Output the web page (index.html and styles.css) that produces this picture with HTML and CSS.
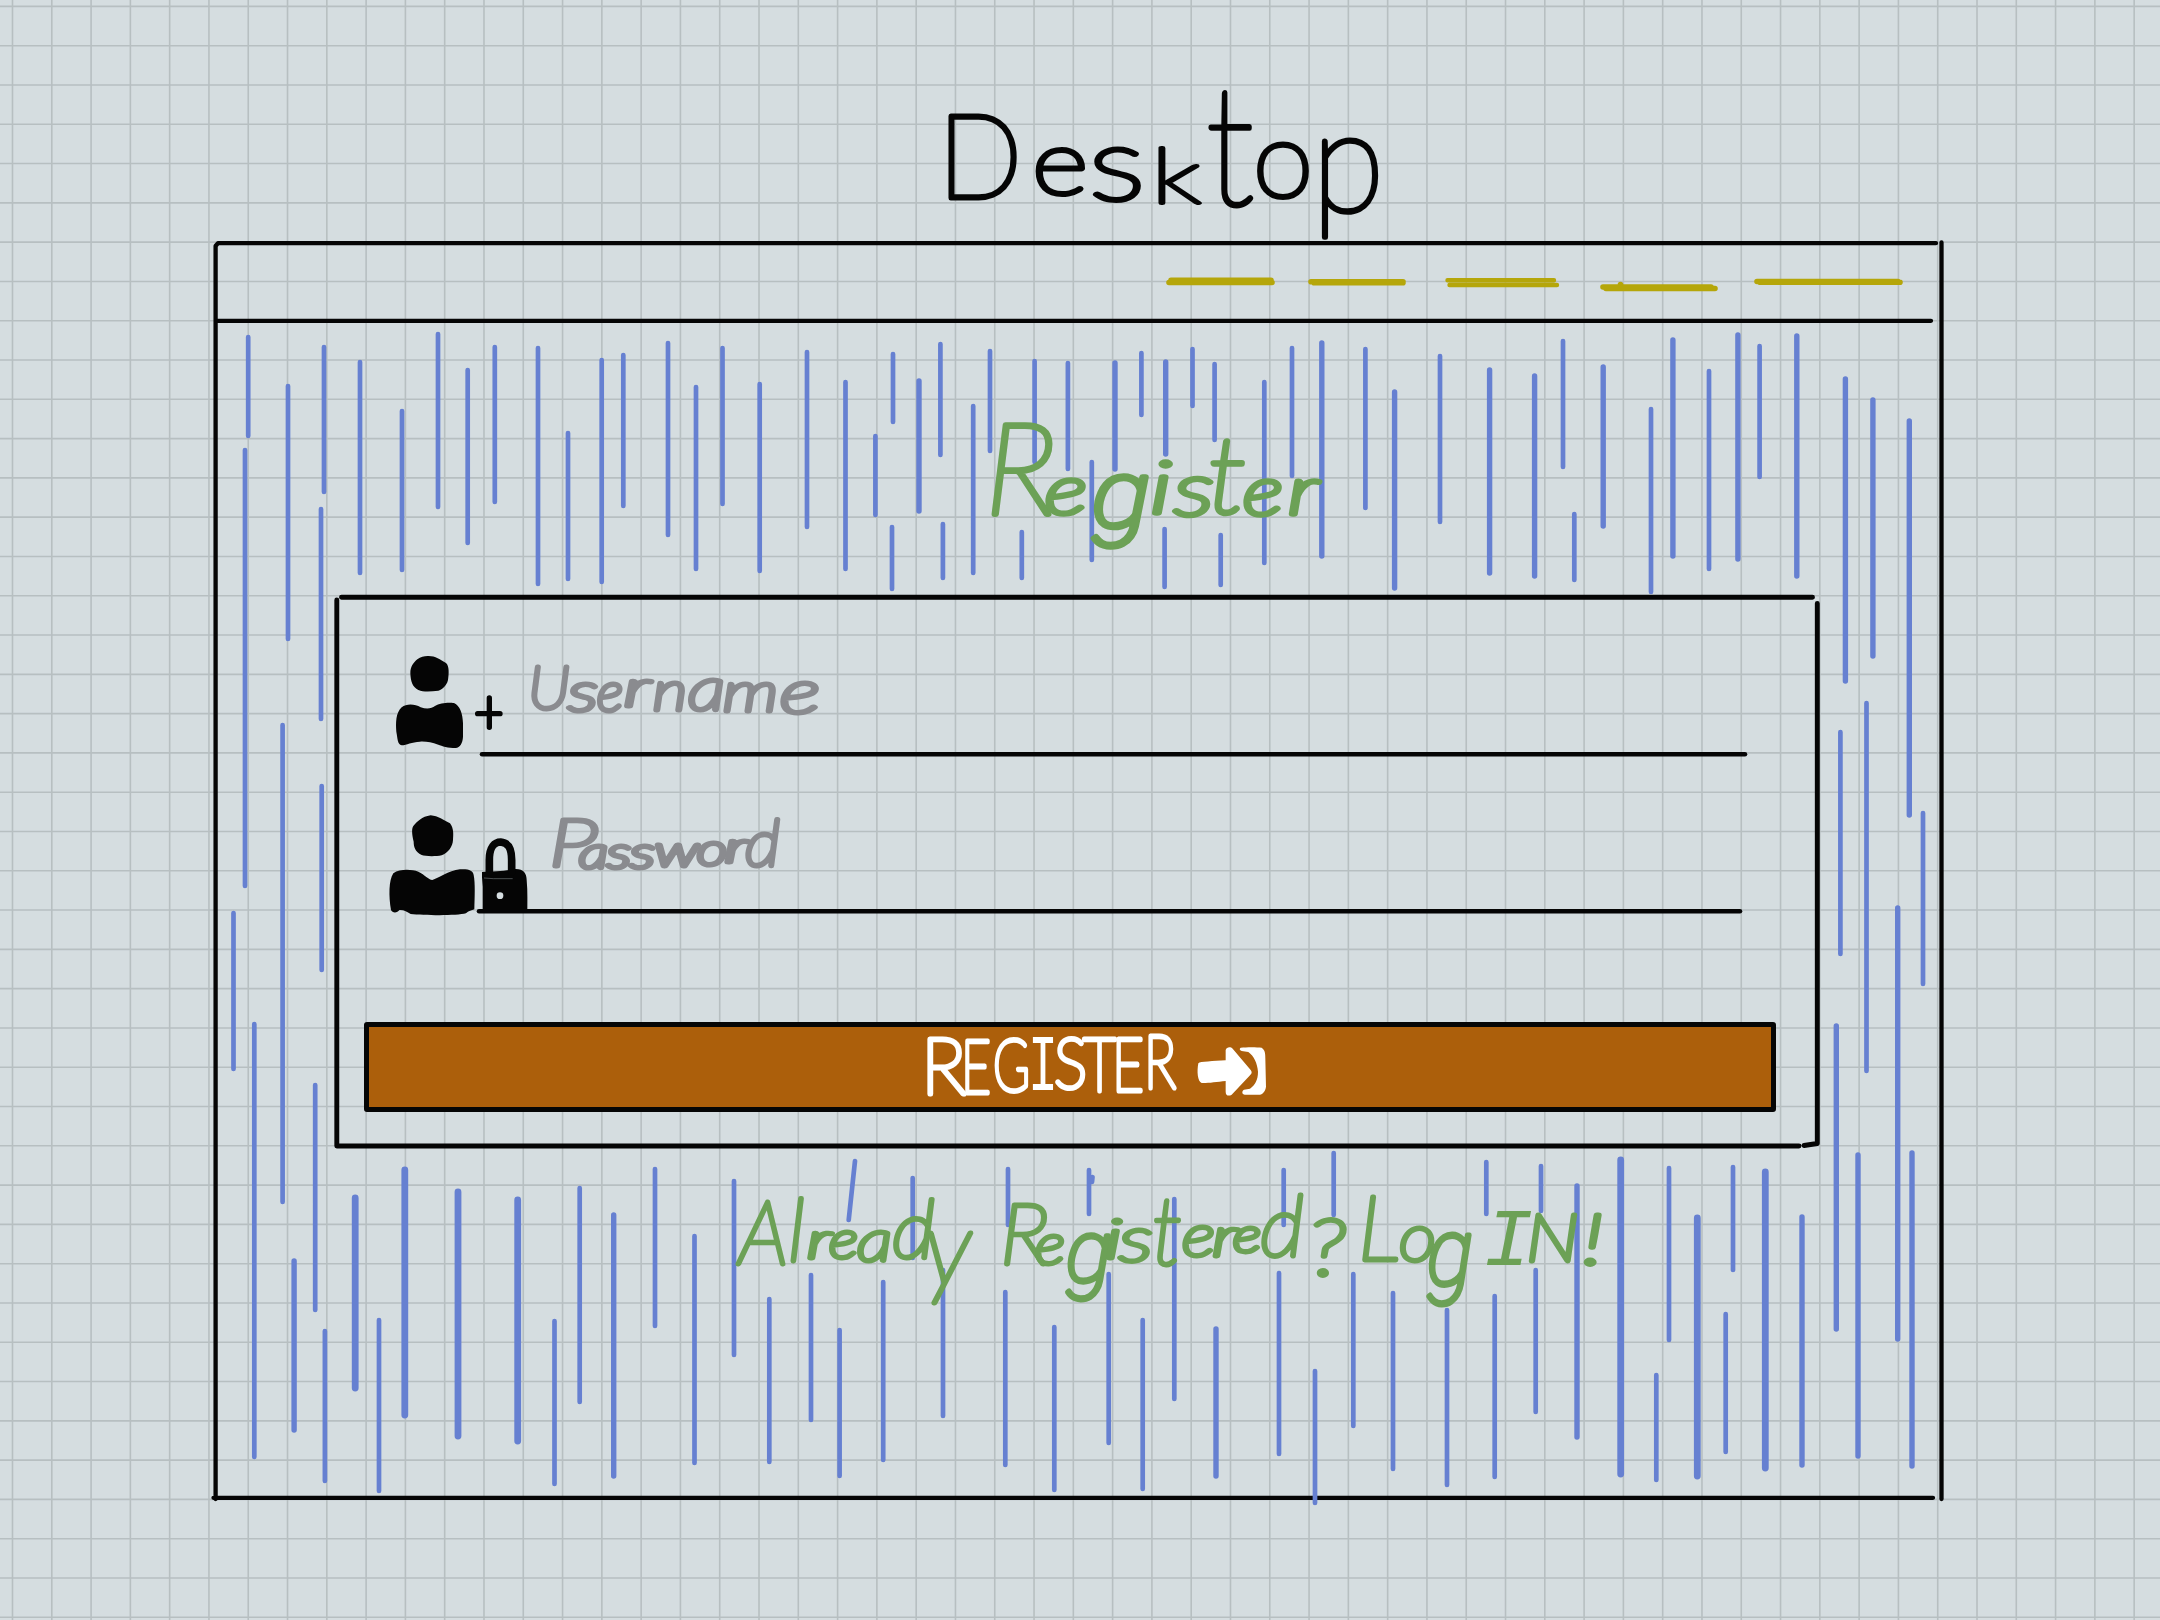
FILE: index.html
```html
<!DOCTYPE html>
<html lang="en">
<head>
<meta charset="utf-8">
<title>Desktop</title>
<link rel="stylesheet" href="styles.css">
</head>
<body>
<div class="page">
  <svg class="backdrop" viewBox="0 0 2160 1620" aria-hidden="true">
    <g class="grid">
      <line x1="11.7" y1="810" x2="2160" y2="810" stroke-width="1620"/>
      <line x1="1080" y1="5.6" x2="1080" y2="1620" stroke-width="2160"/>
    </g>
    <g class="ink">
      <path d="M215.6 1499V246L218 243.2H1936M216 320.8H1931M1941.5 242.500V1499M213.500 1497.800H1933"/>
      <path class="bold" d="M341.500 597.200H1812.500M336.800 600V1146H1799M1817.300 603.500V1143.500L1804 1145.500"/>
    </g>
    <g class="rain">
      <path stroke-width="4.700" d="M248.200 337V436M245 450V886M288 386V639M324 347V492M321 509V719M360 362V573M402 411V570M438 334V507M467.700 370V543M494.800 347V502M538 348V584M568 433V579M601.700 360V582M623.300 355V506M668 343V535M696 387V569M722.500 348V504M759.700 384V571M807 352V527M845.500 382V569M875.400 436V515M893 354V422M892 527V589M940.400 344V455M973.200 406V573M990 351V451M942.900 524V578M1021.800 532V578M1034.600 361V462M1067.900 363V469M1091.800 462V560M1141.400 353V415M1192.500 349V406M1214.600 364V440M1164.600 529V587M1220.700 535V585M1264.300 382V563M1292 348V476M1365.400 349V508M1440 356V522M1563 341V467M1574.300 514V580M1651 409V592M1709 371V569M1759.600 346V477M282.600 725V1202M321.700 786V970M233.500 913V1069M254.300 1024V1457M315.200 1085V1310M1866.500 703V1071M1840.400 732V954M1923 813V984M1669 1168V1340M1656.300 1375V1480M1733 1167V1270M1725.700 1314V1452M324.900 1331V1481M379 1320V1491M554.500 1321V1484M579.700 1188V1402M655 1169V1326M694.500 1236V1463M734 1181V1355M769.300 1299V1462M811 1275V1420M839.600 1330V1476M883.200 1282V1460M855 1161L848.700 1220M912.700 1178V1258M943 1270V1416M1005.300 1292V1465M1008 1169V1225M1054.300 1327V1490M1089 1170V1214M1092.500 1177L1092 1182M1108.700 1274V1443M1142.700 1320V1489M1174.300 1199V1399M1279 1273V1454M1283.700 1170V1225M1315 1371V1503M1333.700 1153V1215M1353.300 1274V1426M1393 1293V1469M1447 1310V1485M1486.300 1162V1214M1494.700 1296V1477M1535.700 1270V1412M1541 1166V1211"/>
      <path stroke-width="5.400" d="M919 381V511M1115 363V469M1165.700 362V454M1321.800 343V556M1394.600 392V588M1489.600 370V573M1534.600 376V576M1603.200 367V526M1672.900 340V556M1737.900 335V559M1796.800 336V576M1845.400 379V681M1872.900 400V656M1909.300 421V815M1897.700 908V1339M1836.300 1026V1329M1802 1217V1465M1858 1155V1456M1912 1153V1466M294.100 1261V1430M613.700 1215V1476M1216 1329V1476M1577 1186V1437"/>
      <path stroke-width="6.800" d="M1697.300 1218V1476M1765.300 1172V1468M355.200 1198V1388M404.800 1170V1415M458 1192V1436M517.700 1200V1441M1620.700 1160V1474"/>
    </g>
  </svg>

  <header class="title">
    <svg width="500" height="200" viewBox="910 70 500 200">
      <text class="hand"><tspan x="938" y="198" font-size="117" textLength="84" lengthAdjust="spacingAndGlyphs">D</tspan><tspan x="1032" y="194" font-size="91" textLength="56" lengthAdjust="spacingAndGlyphs">e</tspan><tspan x="1089" y="200" font-size="103" textLength="56" lengthAdjust="spacingAndGlyphs">s</tspan><tspan class="small" x="1151" y="203" font-size="76" textLength="50" lengthAdjust="spacingAndGlyphs">k</tspan><tspan x="1206" y="205" font-size="166" textLength="48" lengthAdjust="spacingAndGlyphs">t</tspan><tspan x="1253" y="197" font-size="106" textLength="60" lengthAdjust="spacingAndGlyphs">o</tspan><tspan x="1312" y="211" font-size="144" textLength="72" lengthAdjust="spacingAndGlyphs">p</tspan></text>
    </svg>
  </header>

  <main class="window">
    <nav class="nav">
      <svg width="116" height="30" viewBox="1162 270 116 30"><path d="M1169 282.500H1272M1171 280.300H1271"/></svg>
      <svg width="102" height="30" viewBox="1306 270 102 30"><path d="M1311 281.700H1403M1314 282.800H1403"/></svg>
      <svg class="thin" width="120" height="30" viewBox="1442 270 120 30"><path d="M1447.500 280.200H1554M1449.500 285H1557"/></svg>
      <svg width="122" height="30" viewBox="1598 270 122 30"><path d="M1603 287H1711M1606 288.500H1715M1620.500 284.500V286"/></svg>
      <svg width="152" height="30" viewBox="1752 270 152 30"><path d="M1757 281.500H1898M1760 282.300H1900"/></svg>
    </nav>

    <section class="hero">
      <svg width="360" height="180" viewBox="975 405 360 180">
        <text class="hand green wide slant"><tspan x="985" y="514" font-size="126" textLength="71" lengthAdjust="spacingAndGlyphs">R</tspan><tspan x="1045" y="514" font-size="68" textLength="42" lengthAdjust="spacingAndGlyphs">e</tspan><tspan class="round" x="1092" y="527" font-size="95" textLength="58" lengthAdjust="spacingAndGlyphs">g</tspan><tspan x="1150" y="513" font-size="72" textLength="22" lengthAdjust="spacingAndGlyphs">i</tspan><tspan x="1174" y="515" font-size="74" textLength="40" lengthAdjust="spacingAndGlyphs">s</tspan><tspan x="1208" y="513" font-size="106" textLength="38" lengthAdjust="spacingAndGlyphs">t</tspan><tspan x="1243" y="515" font-size="68" textLength="40" lengthAdjust="spacingAndGlyphs">e</tspan><tspan x="1288" y="514" font-size="66" textLength="30" lengthAdjust="spacingAndGlyphs">r</tspan></text>
      </svg>
    </section>

    <form class="card">
      <svg class="field" width="1370" height="115" viewBox="385 650 1370 115">
        <g transform="translate(360 630) scale(.33333)">
          <path d="M203 78C225 77 240 88 258 99C268 108 267 130 264 150C260 168 245 180 235 182C210 185 190 186 175 180C158 172 152 155 151 130C151 110 160 98 172 88C182 80 192 78 203 78Z"/>
          <path d="M125 232C140 220 165 222 182 232C200 238 215 236 225 228C240 217 270 217 282 219C300 228 308 250 309 280V320C308 340 300 352 287 354C265 354 245 348 235 344C215 338 200 334 180 335C155 336 140 345 125 346C112 343 113 325 109 305C107 280 107 248 125 232Z"/>
          <path class="line" stroke-width="16" d="M388 204V292M353 251H420"/>
        </g>
        <path class="line" stroke-width="4.500" d="M482 754.300H1745"/>
        <text class="hand gray slant"><tspan x="528" y="709" font-size="60" textLength="42" lengthAdjust="spacingAndGlyphs">U</tspan><tspan x="568" y="711" font-size="55" textLength="30" lengthAdjust="spacingAndGlyphs">s</tspan><tspan x="597" y="711" font-size="54" textLength="26" lengthAdjust="spacingAndGlyphs">e</tspan><tspan x="624" y="706" font-size="50" textLength="26" lengthAdjust="spacingAndGlyphs">r</tspan><tspan x="653" y="710" font-size="54" textLength="34" lengthAdjust="spacingAndGlyphs">n</tspan><tspan x="688" y="710" font-size="60" textLength="37" lengthAdjust="spacingAndGlyphs">a</tspan><tspan x="723" y="711" font-size="55" textLength="55" lengthAdjust="spacingAndGlyphs">m</tspan><tspan x="780" y="713" font-size="60" textLength="40" lengthAdjust="spacingAndGlyphs">e</tspan></text>
      </svg>
      <svg class="field" width="1370" height="120" viewBox="385 805 1370 120">
        <g transform="translate(360 630) scale(.33333)">
          <path d="M212 556C235 558 250 570 270 580C282 595 280 615 279 630C278 650 265 668 245 676C225 680 195 679 185 675C165 665 161 650 161 635C155 610 155 595 160 588C172 575 185 560 212 556Z"/>
          <path d="M100 730C120 716 155 718 175 725C195 735 205 748 217 750C235 745 265 722 300 718C325 716 340 722 341 735C346 760 344 800 343 838C335 842 325 842 318 850C290 858 190 856 152 852C140 845 130 838 118 840C112 850 97 850 93 840C86 800 86 750 100 730Z"/>
          <path d="M366 726C400 724 450 722 465 717C490 716 500 730 500 750C503 780 502 810 502 842H368V770L366 742Z"/>
          <path class="line" stroke-width="23" d="M388 725V690C388 650 405 636 422 636C445 638 455 655 455 690V725"/>
          <circle class="hole" cx="420" cy="797" r="10"/>
          <path class="scratch" d="M372 744L400 746L458 746"/>
        </g>
        <path class="line" stroke-width="4.500" d="M479 911.300H1740"/>
        <text class="hand gray slant"><tspan x="549" y="866" font-size="67" textLength="48" lengthAdjust="spacingAndGlyphs">P</tspan><tspan x="579" y="868" font-size="44" textLength="29" lengthAdjust="spacingAndGlyphs">a</tspan><tspan x="607" y="868" font-size="43" textLength="24" lengthAdjust="spacingAndGlyphs">s</tspan><tspan x="630" y="868" font-size="44" textLength="25" lengthAdjust="spacingAndGlyphs">s</tspan><tspan x="655" y="866" font-size="42" textLength="43" lengthAdjust="spacingAndGlyphs">w</tspan><tspan x="697" y="865" font-size="43" textLength="30" lengthAdjust="spacingAndGlyphs">o</tspan><tspan x="725" y="862" font-size="41" textLength="22" lengthAdjust="spacingAndGlyphs">r</tspan><tspan x="745" y="866" font-size="65" textLength="35" lengthAdjust="spacingAndGlyphs">d</tspan></text>
      </svg>
      <button class="submit" type="button">
        <svg width="360" height="80" viewBox="910 1027 360 80">
          <text class="hand white"><tspan x="921" y="1094" font-size="79" textLength="45" lengthAdjust="spacingAndGlyphs">R</tspan><tspan x="961" y="1093" font-size="75" textLength="30" lengthAdjust="spacingAndGlyphs">E</tspan><tspan x="993" y="1091" font-size="72" textLength="37" lengthAdjust="spacingAndGlyphs">G</tspan><tspan class="mono" x="1028" y="1090" font-size="80" textLength="30" lengthAdjust="spacingAndGlyphs">I</tspan><tspan x="1054" y="1088" font-size="70" textLength="33" lengthAdjust="spacingAndGlyphs">S</tspan><tspan x="1083" y="1091" font-size="74" textLength="33" lengthAdjust="spacingAndGlyphs">T</tspan><tspan x="1112" y="1091" font-size="75" textLength="32" lengthAdjust="spacingAndGlyphs">E</tspan><tspan x="1144" y="1088" font-size="74" textLength="32" lengthAdjust="spacingAndGlyphs">R</tspan></text>
          <g class="enter" transform="translate(880 1000) scale(.33333)">
            <path d="M955 190C960 184 1000 184 1037 181V150C1040 140 1052 140 1058 146L1112 210C1118 218 1114 222 1108 228L1055 284C1045 290 1037 286 1037 275V243C1010 246 980 250 965 249C953 245 950 215 955 190Z"/>
            <path d="M1082 143C1100 141 1130 141 1145 143C1155 150 1156 160 1156 175L1158 260C1156 275 1148 282 1140 284H1095C1085 284 1085 272 1092 269L1110 266C1125 255 1134 240 1134 215C1132 190 1122 168 1105 156L1085 153C1078 150 1078 146 1082 143Z"/>
          </g>
        </svg>
      </button>
    </form>

    <a class="login">
      <svg width="900" height="150" viewBox="720 1180 900 150">
        <text class="hand green fine slant"><tspan x="739" y="1264" font-size="89" textLength="49" lengthAdjust="spacingAndGlyphs">A</tspan><tspan x="788" y="1261" font-size="86" textLength="17" lengthAdjust="spacingAndGlyphs">l</tspan><tspan x="807" y="1258" font-size="50" textLength="24" lengthAdjust="spacingAndGlyphs">r</tspan><tspan x="829" y="1258" font-size="52" textLength="29" lengthAdjust="spacingAndGlyphs">e</tspan><tspan x="857" y="1261" font-size="58" textLength="35" lengthAdjust="spacingAndGlyphs">a</tspan><tspan x="892" y="1258" font-size="80" textLength="43" lengthAdjust="spacingAndGlyphs">d</tspan><tspan x="925" y="1284" font-size="104" textLength="46" lengthAdjust="spacingAndGlyphs">y</tspan> <tspan x="1000" y="1264" font-size="85" textLength="49" lengthAdjust="spacingAndGlyphs">R</tspan><tspan x="1035" y="1264" font-size="56" textLength="30" lengthAdjust="spacingAndGlyphs">e</tspan><tspan class="round" x="1066" y="1281" font-size="88" textLength="46" lengthAdjust="spacingAndGlyphs">g</tspan><tspan x="1105" y="1258" font-size="54" textLength="17" lengthAdjust="spacingAndGlyphs">i</tspan><tspan x="1119" y="1261" font-size="62" textLength="34" lengthAdjust="spacingAndGlyphs">s</tspan><tspan x="1152" y="1264" font-size="94" textLength="30" lengthAdjust="spacingAndGlyphs">t</tspan><tspan x="1182" y="1256" font-size="58" textLength="33" lengthAdjust="spacingAndGlyphs">e</tspan><tspan x="1212" y="1256" font-size="55" textLength="25" lengthAdjust="spacingAndGlyphs">r</tspan><tspan x="1233" y="1252" font-size="48" textLength="28" lengthAdjust="spacingAndGlyphs">e</tspan><tspan x="1260" y="1256" font-size="84" textLength="44" lengthAdjust="spacingAndGlyphs">d</tspan><tspan x="1308" y="1275" font-size="78" textLength="38" lengthAdjust="spacingAndGlyphs">?</tspan> <tspan x="1358" y="1260" font-size="90" textLength="42" lengthAdjust="spacingAndGlyphs">L</tspan><tspan x="1399" y="1261" font-size="66" textLength="37" lengthAdjust="spacingAndGlyphs">o</tspan><tspan class="round" x="1427" y="1285" font-size="94" textLength="46" lengthAdjust="spacingAndGlyphs">g</tspan> <tspan class="mono" x="1483" y="1265" font-size="82" textLength="50" lengthAdjust="spacingAndGlyphs">I</tspan><tspan x="1526" y="1261" font-size="66" textLength="53" lengthAdjust="spacingAndGlyphs">N</tspan><tspan x="1582" y="1264" font-size="71" textLength="22" lengthAdjust="spacingAndGlyphs">!</tspan></text>
      </svg>
    </a>
  </main>
</div>
</body>
</html>
```
FILE: styles.css
```css
* { box-sizing: border-box; }

body {
  margin: 0;
  background: #d5dde0;
  font-family: Lato, "Open Sans", sans-serif;
}

svg { display: block; overflow: visible; }

.page {
  position: relative;
  width: 2160px;
  height: 1620px;
  overflow: hidden;
}

.backdrop {
  position: absolute;
  inset: 0;
  width: 2160px;
  height: 1620px;
}

.grid line { stroke: #b7bfc1; stroke-dasharray: 1.6 37.69; }
.ink path { fill: none; stroke: #050505; stroke-width: 4.3; stroke-linecap: round; stroke-linejoin: round; }
.ink .bold { stroke-width: 4.9; }
.rain path { fill: none; stroke: #6680d1; stroke-linecap: round; }

.title, .window { position: relative; }
.title { height: 243px; padding: 70px 0 0 910px; }

.window {
  display: flex;
  flex-direction: column;
  width: 1726px;
  height: 1257px;
  margin-left: 215px;
}

.nav {
  display: flex;
  justify-content: flex-end;
  align-items: flex-start;
  height: 78px;
  padding: 27px 37px 0 0;
}
.nav svg { margin-left: 34px; }
.nav svg:nth-child(2) { margin-left: 28px; }
.nav svg:nth-child(4) { margin-left: 36px; }
.nav svg:nth-child(5) { margin-left: 32px; }
.nav path { fill: none; stroke: #b5a60a; stroke-width: 5.6; stroke-linecap: round; }
.nav .thin path { stroke-width: 4.4; }

.hero { height: 276px; padding: 84px 0 0 760px; }

.card {
  display: flex;
  flex-direction: column;
  height: 549px;
  margin: 0 123px 0 121px;
  padding: 53px 42px 34px 28px;
}
.field { margin-left: 21px; fill: #050505; }
.field + .field { margin-top: 40px; }
.line { fill: none; stroke: #050505; stroke-linecap: round; }
.hole { fill: #d5dde0; }
.scratch { fill: none; stroke: #6d7375; stroke-width: 2; }

.submit {
  width: 1412px;
  height: 90px;
  margin: auto 0 0;
  padding: 0 0 0 541px;
  border: 5px solid #050505;
  border-radius: 3px;
  background: #ac5f0b;
  font: inherit;
}
.enter { fill: #fff; }

.login { padding: 34px 0 0 505px; }

.hand {
  font-family: Lato, "Open Sans", sans-serif;
  font-weight: 100;
  fill: #050505;
  stroke: #050505;
  stroke-width: 5px;
  stroke-linejoin: round;
  stroke-linecap: round;
}
.slant { font-style: italic; }
.green { fill: #6ca156; stroke: #6ca156; }
.gray { fill: #8a8b8f; stroke: #8a8b8f; }
.white { fill: #fff; stroke: #fff; }
.wide { stroke-width: 5.6px; }
.fine { stroke-width: 4.8px; }
.small { stroke-width: 3.8px; }
.round { font-family: Roboto, sans-serif; }
.mono { font-family: "Liberation Mono", monospace; font-weight: 400; stroke-width: 0; }
```
